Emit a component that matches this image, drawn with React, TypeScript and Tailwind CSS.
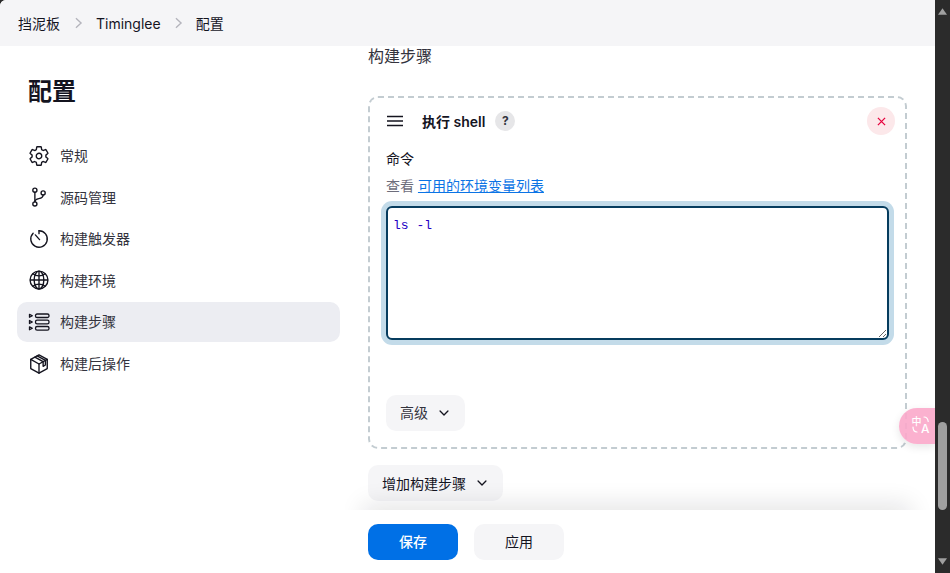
import React from "react";
import { IoSettingsOutline, IoGitBranchOutline, IoGlobeOutline, IoChevronDown } from "react-icons/io5";

const font = "font-['Inter','Noto_Sans_CJK_SC',sans-serif]";

function TimerIcon() {
  return (
    <svg viewBox="0 0 24 24" className="w-[22px] h-[22px]" fill="none" stroke="#14141f" strokeWidth="1.5" strokeLinecap="round" strokeLinejoin="round">
      <path d="M12 3a9 9 0 1 1-6.400 2.700" />
      <path d="M12 3v3.200" />
      <path d="M8 7.500l4.600 5.200" />
    </svg>
  );
}

function ListIcon() {
  return (
    <svg viewBox="0 0 22 22" className="w-[22px] h-[22px]" fill="none" stroke="#14141f" strokeWidth="1.300" strokeLinejoin="round">
      <rect x="7.500" y="3" width="13.500" height="3.500" rx="1.600" />
      <rect x="7.500" y="9.200" width="13.500" height="3.600" rx="1.600" />
      <rect x="7.500" y="15.500" width="13.500" height="3.600" rx="1.600" />
      <path d="M1.500 3.300l2.800 1.500-2.800 1.500z" />
      <path d="M1.500 9.500l2.800 1.500-2.800 1.500z" />
      <path d="M1.500 15.800l2.800 1.500-2.800 1.500z" />
    </svg>
  );
}

function BoxIcon() {
  return (
    <svg viewBox="0 0 24 24" className="w-[22px] h-[22px]" fill="none" stroke="#14141f" strokeWidth="1.500" strokeLinejoin="round" strokeLinecap="round">
      <path d="M12 2l9 5v10l-9 5-9-5V7z" />
      <path d="M3 7l9 5 9-5" />
      <path d="M12 12v10" />
      <path d="M7.500 4.500l9 5v5l2.500-1.400V8.100l-9-5" />
    </svg>
  );
}

const items: { label: string; icon: React.ReactNode; active?: boolean }[] = [
  { label: "常规", icon: <IoSettingsOutline size={22} color="#14141f" /> },
  { label: "源码管理", icon: <IoGitBranchOutline size={22} color="#14141f" /> },
  { label: "构建触发器", icon: <TimerIcon /> },
  { label: "构建环境", icon: <IoGlobeOutline size={22} color="#14141f" /> },
  { label: "构建步骤", icon: <ListIcon />, active: true },
  { label: "构建后操作", icon: <BoxIcon /> },
];

function Chevron() {
  return <IoChevronDown size={14} color="#14141f" />;
}

function Crumb({ className }: { className: string }) {
  return (
    <svg viewBox="0 0 10 14" className={`w-[9px] h-[12px] ${className}`} fill="none" stroke="#b4b4bc" strokeWidth="1.600">
      <path d="M2 1.500l6 5.500-6 5.500" />
    </svg>
  );
}

export default function App() {
  return (
    <div className={`${font} w-[950px] h-[573px] flex bg-[#2b2b2b] overflow-hidden text-[#14141f]`}>
      <div className="relative flex-1 flex flex-col bg-white rounded-tl-[6px] overflow-hidden">
        <header className="h-[46px] shrink-0 bg-[#f5f5f7] flex items-center pl-[18px] text-[14px]">
          <span>挡泥板</span>
          <Crumb className="ml-[14px] mr-[13px]" />
          <span>Timinglee</span>
          <Crumb className="mx-[13px]" />
          <span>配置</span>
        </header>

        <div className="flex-1 flex min-h-0">
          <aside className="w-[368px] shrink-0 pl-[17px] pr-[28px]">
            <h1 className="text-[24px] font-bold pl-[11px] mt-[28px] mb-[25.6px] leading-[36px]">配置</h1>
            <nav className="flex flex-col gap-[1.6px]">
              {items.map((it) => (
                <div
                  key={it.label}
                  className={`h-[40px] rounded-[10px] flex items-center pl-[11px] text-[14px] text-[#33333d] ${it.active ? "bg-[#ecedf2]" : ""}`}
                >
                  <span className="w-[22px] h-[22px] flex items-center justify-center mr-[10px]">{it.icon}</span>
                  {it.label}
                </div>
              ))}
            </nav>
          </aside>

          <main className="flex-1 pr-[28px] min-w-0">
            <h2 className="text-[16px] text-[#33333d] leading-[24px] -mt-[2px] mb-[28px]">构建步骤</h2>
            <section className="h-[353px] border-2 border-dashed border-[#c3ccd1] rounded-[10px] px-[16px] flex flex-col">
              <div className="flex items-center mt-[7px] h-[32px]">
                <svg viewBox="0 0 16 12" className="w-[16px] h-[12px] ml-[1px]" fill="none" stroke="#14141f" strokeWidth="1.400"><path d="M0 1.500h16M0 6h16M0 10.500h16" /></svg>
                <span className="ml-[19px] text-[14px] font-semibold">执行 shell</span>
                <span className="ml-[10px] w-[20px] h-[20px] rounded-full bg-[#e6e6e8] flex items-center justify-center text-[12px] font-bold text-[#33333d]">?</span>
                <span className="ml-auto -mr-[6px] w-[28px] h-[28px] rounded-full bg-[#fce8ea] flex items-center justify-center">
                  <svg viewBox="0 0 10 10" className="w-[9px] h-[9px]" fill="none" stroke="#e6003c" strokeWidth="1.400"><path d="M1 1l8 8M9 1l-8 8" /></svg>
                </span>
              </div>
              <div className="text-[14px] mt-[12px] leading-[20px]">命令</div>
              <div className="text-[14px] mt-[7px] leading-[20px] text-[#6d6d7b]">
                查看 <a className="text-[#0b74e5] underline">可用的环境变量列表</a>
              </div>
              <textarea
                readOnly
                value="ls -l"
                className="block mt-[10px] w-[503px] h-[134px] shrink-0 rounded-[6px] border-2 border-[#063c5e] bg-white px-[5px] py-[8px] text-[13px] leading-[20px] text-[#2300c4] font-['Liberation_Mono',monospace] shadow-[0_0_0_5px_#c3dbe9] outline-none resize"
              />
              <button className="mt-[55px] w-[79px] h-[36px] rounded-[10px] bg-[#f5f5f7] flex items-center justify-center gap-[9px] text-[14px] text-[#33333d] pb-[1px]">
                高级 <Chevron />
              </button>
            </section>
            <button className="mt-[16px] w-[135px] h-[36px] rounded-[10px] bg-[#f5f5f7] flex items-center justify-center gap-[9px] text-[14px]">
              增加构建步骤 <Chevron />
            </button>
          </main>
        </div>

        <div className="absolute left-[345px] right-0 bottom-[63px] h-[45px] overflow-hidden pointer-events-none">
          <div className="absolute left-[18px] right-[24px] top-[45px] h-[30px] shadow-[0_-6px_24px_rgba(20,20,31,0.11)]" />
        </div>
        <footer className="absolute left-0 right-0 bottom-0 h-[63px] flex pl-[368px] pt-[14px] gap-[16px] pointer-events-none">
          <span className="w-[90px] h-[36px] rounded-[10px] bg-[#0070e6] text-white text-[14px] font-medium flex items-center justify-center pb-[1px]">保存</span>
          <span className="w-[90px] h-[36px] rounded-[10px] bg-[#f5f5f7] text-[14px] flex items-center justify-center pb-[1px]">应用</span>
        </footer>

        <div className="absolute right-0 top-[408px] w-[36px] h-[36px] rounded-l-[18px] bg-[#fba9ca]/90 shadow-[0_3px_8px_rgba(0,0,0,0.1)] text-white">
          <span className="absolute left-[12.500px] top-[8px] text-[10px] leading-[10px] font-medium">中</span>
          <span className="absolute left-[22px] top-[14.500px] text-[12px] leading-[12px] font-medium">A</span>
          <svg viewBox="0 0 36 36" className="absolute inset-0 w-[36px] h-[36px]" fill="none" stroke="white" strokeWidth="1.200" strokeLinecap="round">
            <path d="M25 9c2.300 0 3.800 1.500 4.200 4.500" />
            <path d="M14 19c0 3 1.500 5 4 5" />
          </svg>
        </div>
      </div>

      <div className="w-[15px] shrink-0 bg-[#2b2b2b] relative">
        <svg viewBox="0 0 10 7" className="absolute left-[3px] top-[8px] w-[9px] h-[7px]"><path d="M5 0l5 7H0z" fill="#9f9f9f" /></svg>
        <div className="absolute left-[3px] top-[422px] w-[9px] h-[88px] rounded-full bg-[#9f9f9f]" />
        <svg viewBox="0 0 10 7" className="absolute left-[3px] top-[558px] w-[9px] h-[7px]"><path d="M0 0h10L5 7z" fill="#9f9f9f" /></svg>
      </div>
    </div>
  );
}
